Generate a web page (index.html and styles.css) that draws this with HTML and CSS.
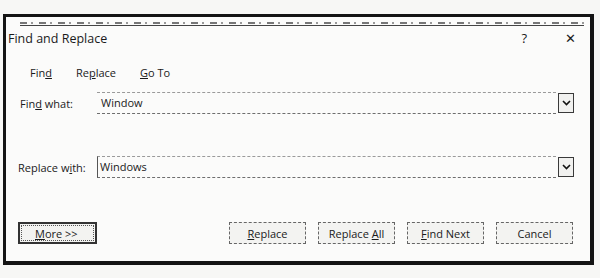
FILE: index.html
```html
<!DOCTYPE html>
<html lang="en">
<head>
    <meta charset="UTF-8">
    <title>Find and Replace</title>
    <link rel="stylesheet" href="styles.css">
</head>
<body>
    <div class="page">
        <div class="dialog">
            <!-- bit of the scanned page showing above the title bar -->
            <div class="scan-strip"></div>

            <div class="titlebar">
                <span class="title">Find and Replace</span>
                <span class="help">?</span>
                <span class="close">&#x2715;</span>
            </div>

            <div class="tabs">
                <span>Fin<u>d</u></span>
                <span>Re<u>p</u>lace</span>
                <span><u>G</u>o To</span>
            </div>

            <!-- Find what -->
            <div class="field-row">
                <label class="label">Fin<u>d</u> what:</label>
                <div class="field">Window</div>
                <div class="drop">
                    <svg width="9" height="6" viewBox="0 0 9 6"><path d="M1 1 L4.5 4.5 L8 1" fill="none" stroke="#111" stroke-width="1.6"/></svg>
                </div>
            </div>

            <!-- Replace with -->
            <div class="field-row replace-row">
                <label class="label">Replace w<u>i</u>th:</label>
                <div class="field field-active">Windows</div>
                <div class="drop">
                    <svg width="9" height="6" viewBox="0 0 9 6"><path d="M1 1 L4.5 4.5 L8 1" fill="none" stroke="#111" stroke-width="1.6"/></svg>
                </div>
            </div>

            <div class="buttons">
                <button class="btn btn-more"><u>M</u>ore &gt;&gt;</button>
                <div class="btn-group">
                    <button class="btn"><u>R</u>eplace</button>
                    <button class="btn">Replace <u>A</u>ll</button>
                    <button class="btn"><u>F</u>ind Next</button>
                    <button class="btn">Cancel</button>
                </div>
            </div>
        </div>
    </div>
</body>
</html>
```

FILE: styles.css
```css
* {
    margin: 0;
    padding: 0;
    box-sizing: border-box;
}

body {
    background: #f7f7f5;
    font-family: 'Open Sans', 'Noto Sans', sans-serif;
    color: #1a1a1a;
    font-size: 11px;
}

.page {
    padding: 14px 0 0 3px;
    width: 594px;
}

.dialog {
    background: #fbfbfa;
    border: 3px solid #141414;
    border-right-width: 4px;
    border-bottom-width: 4px;
    height: 251px;
}

.scan-strip {
    height: 9px;
    border-bottom: 1px solid #444;
    margin: 0 6px 0 14px;
    background: repeating-linear-gradient(90deg, #777 0 7px, transparent 7px 11px, #999 11px 13px, transparent 13px 19px) 0 5px / 100% 2px no-repeat;
}

.titlebar {
    display: flex;
    align-items: center;
    height: 24px;
    padding-left: 2px;
    font-size: 12.5px;
}

.title {
    flex: 1;
}

.help {
    font-size: 13px;
    margin-right: 38px;
}

.close {
    font-size: 13px;
    margin-right: 14px;
}

.tabs {
    display: flex;
    gap: 24px;
    margin-top: 12px;
    padding-left: 24px;
    height: 20px;
    align-items: center;
}

.field-row {
    display: flex;
    align-items: center;
    margin-top: 10px;
    padding-left: 14px;
}

.replace-row {
    margin-top: 42px;
    padding-left: 12px;
}

.label {
    width: 77px;
}

.replace-row .label {
    width: 79px;
}

.field {
    width: 459px;
    height: 22px;
    line-height: 20px;
    padding-left: 4px;
    border-top: 1px dashed #9a9a9a;
    border-bottom: 1px dashed #6e6e6e;
}

.field-active {
    border-left: 1px solid #555;
    padding-left: 2px;
}

.drop {
    width: 16px;
    height: 20px;
    margin-left: 2px;
    border: 1px solid #3a3a3a;
    display: flex;
    align-items: center;
    justify-content: center;
    background: #f1f1ef;
}

.buttons {
    display: flex;
    justify-content: space-between;
    margin-top: 44px;
    padding: 0 17px 0 12px;
}

.btn-group {
    display: flex;
    gap: 12px;
}

.btn {
    width: 77px;
    height: 22px;
    font-family: inherit;
    font-size: 11px;
    color: #1a1a1a;
    background: #f3f3f1;
    border: 1px dashed #666;
}

.btn-more {
    width: 79px;
    border: 2px solid #333;
    outline: 1px dotted #555;
    outline-offset: -4px;
    text-align: left;
    padding-left: 15px;
}
```
